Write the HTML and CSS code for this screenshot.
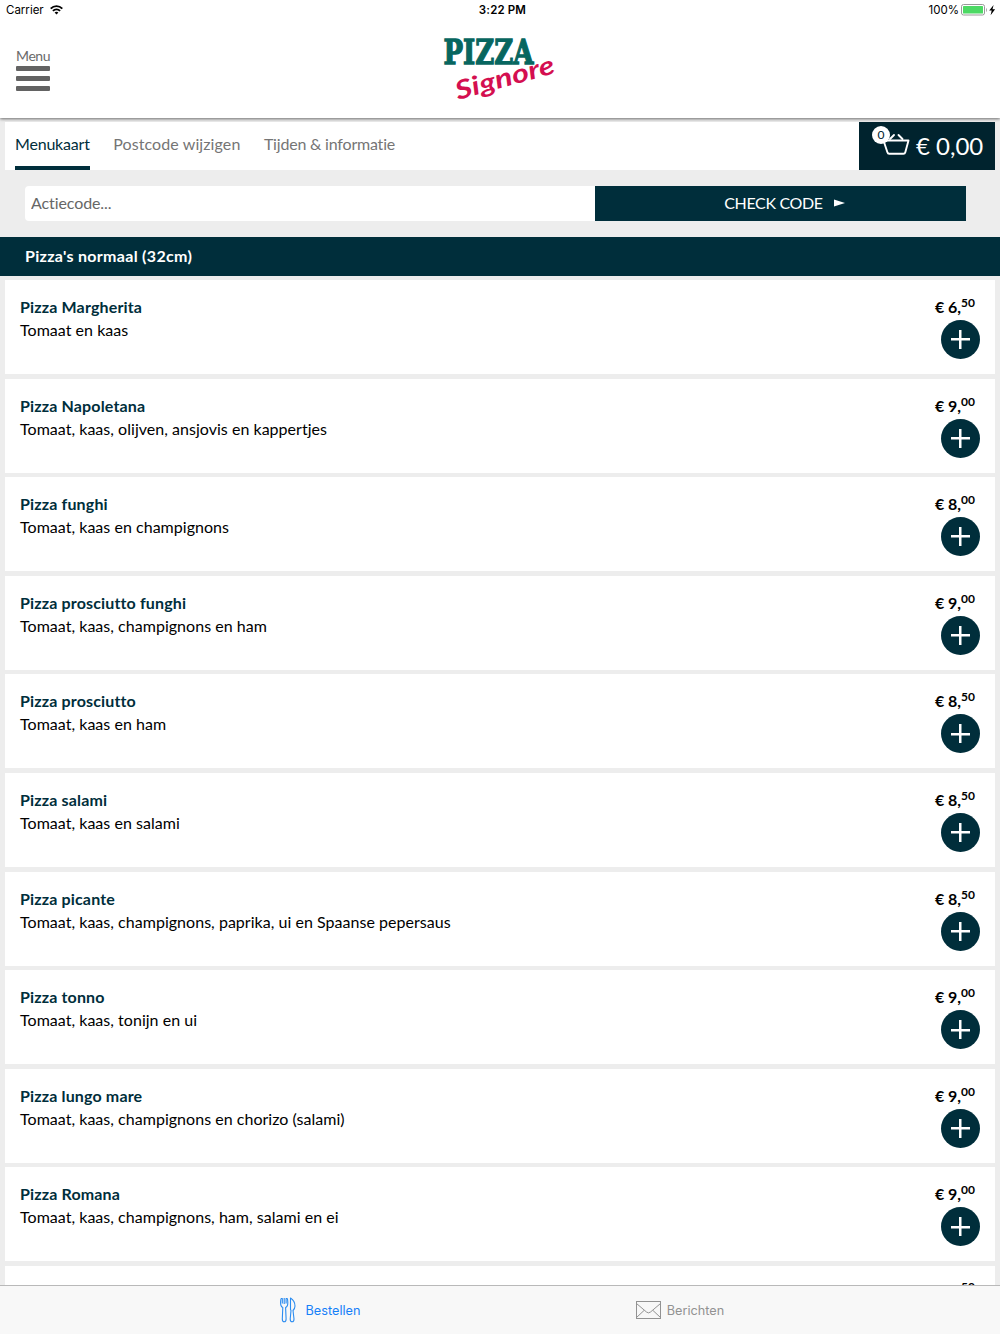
FILE: index.html
```html
<!DOCTYPE html>
<html lang="nl">
<head>
    <meta charset="UTF-8">
    <meta name="viewport" content="width=device-width, initial-scale=1.0">
    <title>Pizza Signore</title>
    <link rel="stylesheet" href="styles.css">
</head>

<body>
<div class="app">

    <header class="header">
        <div class="statusbar">
            <div class="carrier">
                <span>Carrier</span>
                <svg width="13" height="10" viewBox="0 0 13 10" fill="none" stroke="#000" stroke-width="1.9">
                    <path d="M0.7 3.7C4 0.3 9 0.3 12.3 3.7"/>
                    <path d="M2.9 5.9C5 3.9 8 3.9 10.1 5.9"/>
                    <path d="M4.6 7.5C5.8 6.5 7.2 6.5 8.4 7.5L6.5 9.6Z" fill="#000" stroke="none"/>
                </svg>
            </div>
            <span class="clock">3:22 PM</span>
            <div class="battery">
                <span>100%</span>
                <svg width="36" height="12" viewBox="0 0 36 12">
                    <rect x="0.5" y="0.5" width="23" height="10.5" rx="2" fill="#fff" stroke="#999"/>
                    <rect x="2" y="2" width="20" height="7.5" rx="0.5" fill="#4cd964"/>
                    <path d="M25 4v4c1.2-0.6 1.2-3.4 0-4z" fill="#999"/>
                    <path d="M32.6 1L28.2 6.5h2.5l-1.1 4.7 4.5-6h-2.6z" fill="#000"/>
                </svg>
            </div>
        </div>
        <div class="topbar">
            <div class="menu">
                <span>Menu</span>
                <svg width="34" height="25" viewBox="0 0 34 25" fill="#636363">
                    <rect width="34" height="5" rx="1"/>
                    <rect y="10" width="34" height="5" rx="1"/>
                    <rect y="20" width="34" height="5" rx="1"/>
                </svg>
            </div>
            <svg class="logo" width="120" height="76" viewBox="0 0 120 76">
                <text class="logo-pizza" x="3.5" y="29.5" textLength="90" lengthAdjust="spacingAndGlyphs">PIZZA</text>
                <text class="logo-signore" transform="translate(18 66) rotate(-15.5)" x="0" y="0" textLength="102" lengthAdjust="spacingAndGlyphs">Signore</text>
            </svg>
        </div>
    </header>

    <nav class="tabs">
        <a class="tab active">Menukaart</a>
        <a class="tab tab-postcode">Postcode wijzigen</a>
        <a class="tab tab-info">Tijden &amp; informatie</a>
        <div class="cart">
            <div class="basket">
                <svg width="28" height="22" viewBox="0 0 28 22" fill="none" stroke="#fff" stroke-width="1.9" stroke-linejoin="round" stroke-linecap="round">
                    <path d="M1.5 7.5h25l-3.2 11.7q-0.4 1.5-1.8 1.5H7.2q-1.4 0-1.8-1.5z"/>
                    <path d="M8 6l4-4M20.5 6l-4-4"/>
                </svg>
                <span class="badge">0</span>
            </div>
            <span class="total">€ 0,00</span>
        </div>
    </nav>

    <form class="action">
        <input class="code" type="text" placeholder="Actiecode...">
        <button class="check" type="button"><span>CHECK CODE</span>
            <svg width="11" height="8" viewBox="0 0 11 8"><path d="M0 0.5L11 4L0 7.5z" fill="#fff"/></svg>
        </button>
    </form>

    <h2 class="category">Pizza's normaal (32cm)</h2>

    <main class="list">
        <div class="item">
            <div class="info"><h3>Pizza Margherita</h3><p>Tomaat en kaas</p></div>
            <div class="buy"><div class="price">€ 6,<sup>50</sup></div><button class="plus"></button></div>
        </div>
        <div class="item">
            <div class="info"><h3>Pizza Napoletana</h3><p>Tomaat, kaas, olijven, ansjovis en kappertjes</p></div>
            <div class="buy"><div class="price">€ 9,<sup>00</sup></div><button class="plus"></button></div>
        </div>
        <div class="item">
            <div class="info"><h3>Pizza funghi</h3><p>Tomaat, kaas en champignons</p></div>
            <div class="buy"><div class="price">€ 8,<sup>00</sup></div><button class="plus"></button></div>
        </div>
        <div class="item">
            <div class="info"><h3>Pizza prosciutto funghi</h3><p>Tomaat, kaas, champignons en ham</p></div>
            <div class="buy"><div class="price">€ 9,<sup>00</sup></div><button class="plus"></button></div>
        </div>
        <div class="item">
            <div class="info"><h3>Pizza prosciutto</h3><p>Tomaat, kaas en ham</p></div>
            <div class="buy"><div class="price">€ 8,<sup>50</sup></div><button class="plus"></button></div>
        </div>
        <div class="item">
            <div class="info"><h3>Pizza salami</h3><p>Tomaat, kaas en salami</p></div>
            <div class="buy"><div class="price">€ 8,<sup>50</sup></div><button class="plus"></button></div>
        </div>
        <div class="item">
            <div class="info"><h3>Pizza picante</h3><p>Tomaat, kaas, champignons, paprika, ui en Spaanse pepersaus</p></div>
            <div class="buy"><div class="price">€ 8,<sup>50</sup></div><button class="plus"></button></div>
        </div>
        <div class="item">
            <div class="info"><h3>Pizza tonno</h3><p>Tomaat, kaas, tonijn en ui</p></div>
            <div class="buy"><div class="price">€ 9,<sup>00</sup></div><button class="plus"></button></div>
        </div>
        <div class="item">
            <div class="info"><h3>Pizza lungo mare</h3><p>Tomaat, kaas, champignons en chorizo (salami)</p></div>
            <div class="buy"><div class="price">€ 9,<sup>00</sup></div><button class="plus"></button></div>
        </div>
        <div class="item">
            <div class="info"><h3>Pizza Romana</h3><p>Tomaat, kaas, champignons, ham, salami en ei</p></div>
            <div class="buy"><div class="price">€ 9,<sup>00</sup></div><button class="plus"></button></div>
        </div>
        <div class="item last">
            <div class="info"></div>
            <div class="buy"><div class="price"><sup>50</sup></div></div>
        </div>
    </main>

    <footer class="bottombar">
        <a class="bottom-link selected">
            <svg width="16" height="26" viewBox="0 0 16 26" fill="none" stroke="#2b8cf0" stroke-width="1.1" stroke-linejoin="round">
                <path d="M1 1.5q-0.8 5 0 7 0.5 1.5 1.8 2L2.3 22q0 2.8 1.9 2.800T6.100 22L5.600 10.500q1.300-0.500 1.800-2 0.800-2 0-7"/>
                <path d="M1 1.5h1.3v5M7.4 1.5H6.1v5M4.2 1v6"/>
                <path d="M10.5 1q4.500 3 4.500 8 0 2.500-2 4.500l1 8.500q0 2.800-1.900 2.800T10.200 22l0.800-8.500-0.500-1z"/>
            </svg>
            <span>Bestellen</span>
        </a>
        <a class="bottom-link">
            <svg width="25" height="18" viewBox="0 0 25 18" fill="none" stroke="#929292" stroke-width="1">
                <rect x="0.5" y="0.5" width="24" height="17"/>
                <path d="M0.5 2.5L10.5 11q2 1.8 4 0L24.5 2.5M0.5 16.5L8 9.5M24.5 16.5L17 9.5"/>
            </svg>
            <span>Berichten</span>
        </a>
    </footer>

</div>
</body>
</html>
```
FILE: styles.css
```css
* {
    box-sizing: border-box;
}

body {
    margin: 0;
    font-family: Lato, "Open Sans", sans-serif;
    font-size: 16px;
    background-color: #ededed;
    overflow: hidden;
}

.app {
    display: flex;
    flex-direction: column;
    height: 1334px;
}

/* Header */
.header {
    height: 118px;
    flex: none;
    background-color: #fff;
    box-shadow: 0 1px 3px rgba(0, 0, 0, 0.55);
}

.statusbar {
    display: grid;
    grid-template-columns: 1fr auto 1fr;
    align-items: center;
    height: 20px;
    padding: 0 2px 0 6px;
    font-family: Inter, sans-serif;
    font-size: 11.5px;
}

.carrier,
.battery {
    display: flex;
    align-items: center;
    gap: 6px;
}

.battery {
    justify-content: flex-end;
    gap: 2px;
    margin-right: 1px;
}

.clock {
    margin-left: 1px;
    font-weight: 600;
    letter-spacing: 0.15px;
}

.topbar {
    display: grid;
    grid-template-columns: 1fr 120px 1fr;
    padding: 14px 16px 0;
}

.menu {
    display: flex;
    flex-direction: column;
    padding-top: 12px;
    font-size: 14px;
    line-height: 20px;
    letter-spacing: -0.4px;
    color: #6a6a6a;
}

.logo {
    overflow: visible;
}

.logo-pizza {
    font-family: "DejaVu Serif", serif;
    font-size: 33px;
    font-weight: bold;
    fill: #07665f;
    stroke: #07665f;
    stroke-width: 1.3px;
}

.logo-signore {
    font-family: Lato, sans-serif;
    font-size: 26px;
    font-weight: bold;
    font-style: italic;
    fill: #d40f50;
}

/* Tabs */
.tabs {
    display: flex;
    flex: none;
    height: 48px;
    margin: 4px 5px 0;
    padding-left: 10px;
    background-color: #fff;
}

.tab {
    height: 48px;
    margin-right: 23.5px;
    line-height: 43px;
    letter-spacing: -0.2px;
    color: #757575;
    white-space: nowrap;
}

.tab-postcode {
    letter-spacing: 0.1px;
}

.tab.active {
    color: #002e3b;
    border-bottom: 4px solid #002e3b;
}

.cart {
    display: flex;
    width: 136px;
    margin-left: auto;
    padding: 11px 0 0 23px;
    background-color: #00232e;
    color: #fff;
}

.basket {
    position: relative;
    width: 28px;
    height: 22px;
}

.badge {
    position: absolute;
    left: -10px;
    top: -7px;
    width: 18px;
    height: 18px;
    border-radius: 50%;
    background-color: #fff;
    color: #00232e;
    font-size: 12px;
    line-height: 18px;
    text-align: center;
}

.total {
    margin-left: 6px;
    font-size: 24px;
    line-height: 26px;
    white-space: nowrap;
}

/* Promo code */
.action {
    display: flex;
    flex: none;
    height: 67px;
    padding: 16px 34px 16px 25px;
}

.code {
    width: 570px;
    padding: 0 6px 2px;
    border: none;
    border-radius: 4px 0 0 4px;
    font-family: inherit;
    font-size: 16px;
    letter-spacing: -0.1px;
}

.code::placeholder {
    color: #666;
}

.check {
    display: flex;
    flex: 1;
    align-items: center;
    justify-content: center;
    gap: 11px;
    padding: 0 0 2px 8px;
    border: none;
    background-color: #002e3b;
    color: #fff;
    font-family: inherit;
    font-size: 16px;
    letter-spacing: -0.35px;
}

.category {
    flex: none;
    height: 39px;
    margin: 0;
    padding-left: 25px;
    background-color: #002e3b;
    color: #fff;
    font-size: 16px;
    line-height: 37px;
    letter-spacing: 0.3px;
}

/* Menu items */
.list {
    flex: 1;
    min-height: 0;
    padding: 4px 5px 0;
    overflow: hidden;
}

.item {
    display: flex;
    justify-content: space-between;
    height: 94px;
    margin-bottom: 4.62px;
    padding: 15px 15px 0;
    background-color: #fff;
}

.item.last {
    padding-top: 13px;
}

.info h3 {
    margin: 0;
    color: #002e3b;
    font-size: 16px;
    line-height: 24px;
    letter-spacing: 0.15px;
}

.info p {
    margin: 0;
    line-height: 21px;
    letter-spacing: 0.03px;
}

.buy {
    display: flex;
    flex-direction: column;
    align-items: flex-end;
}

.price {
    height: 25px;
    padding-right: 5px;
    font-weight: bold;
    line-height: 23px;
    white-space: nowrap;
}

.price sup {
    position: relative;
    top: -6px;
    font-size: 12px;
    line-height: 0;
    vertical-align: baseline;
}

.plus {
    width: 39px;
    height: 39px;
    border: none;
    border-radius: 50%;
    background: linear-gradient(#fff, #fff) center / 19px 2.5px no-repeat,
                linear-gradient(#fff, #fff) center / 2.5px 19px no-repeat,
                #002e3b;
}

/* Bottom navigation */
.bottombar {
    display: flex;
    flex: none;
    height: 49px;
    justify-content: center;
    border-top: 1px solid #b9b9b9;
    background-color: #f8f8f8;
    font-family: Inter, sans-serif;
    font-size: 12.7px;
}

.bottom-link {
    display: flex;
    width: 360px;
    align-items: center;
    justify-content: center;
    gap: 6px;
    color: #929292;
}

.bottom-link.selected {
    gap: 10px;
    color: #1680f8;
}
```
